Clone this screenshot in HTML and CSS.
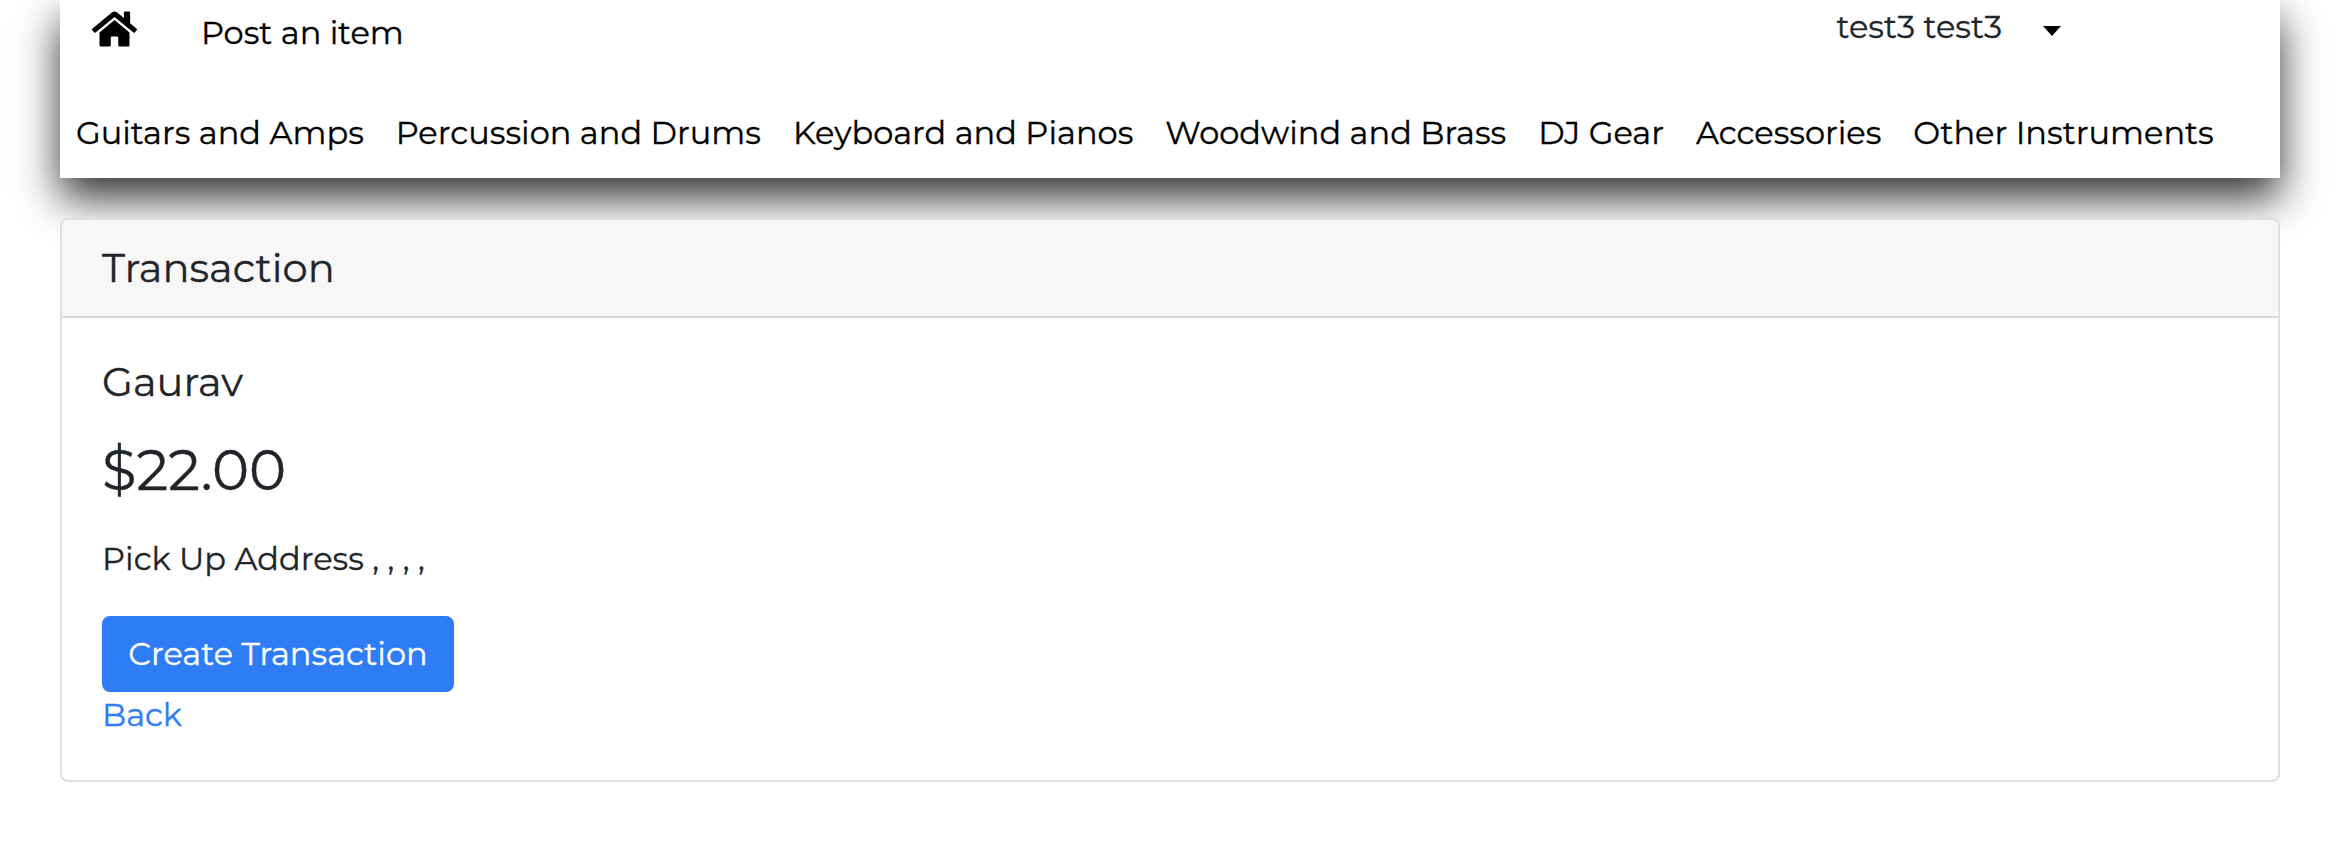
FILE: index.html
```html
<!DOCTYPE html>
<html lang="en">
<head>
<meta charset="utf-8">
<title>Transaction</title>
<link rel="stylesheet" href="styles.css">
</head>
<body>
<header class="header">
  <div class="topbar">
    <a class="home" href="#" aria-label="Home"><svg class="home-icon" viewBox="0 0 576 512"><path d="M280.4 148.3 96 300.1V464a16 16 0 0 0 16 16l112-.3a16 16 0 0 0 16-16V368a16 16 0 0 1 16-16h64a16 16 0 0 1 16 16v95.6a16 16 0 0 0 16 16.1l112 .3a16 16 0 0 0 16-16V300L295.7 148.3a12.2 12.2 0 0 0-15.3 0zM571.6 251.5 488 182.6V44a12 12 0 0 0-12-12h-56a12 12 0 0 0-12 12v72.6L318.5 43a48 48 0 0 0-61 0L4.3 251.5a12 12 0 0 0-1.6 16.9l25.5 31a12 12 0 0 0 16.9 1.6l235.2-193.7a12.2 12.2 0 0 1 15.3 0L530.9 301a12 12 0 0 0 16.9-1.6l25.5-31a12 12 0 0 0-1.7-16.9z"/></svg></a>
    <a class="post" href="#">Post an item</a>
    <div class="user">test3 test3<span class="caret"></span></div>
  </div>
  <nav class="nav">
    <a href="#">Guitars and Amps</a>
    <a href="#">Percussion and Drums</a>
    <a href="#">Keyboard and Pianos</a>
    <a href="#">Woodwind and Brass</a>
    <a href="#">DJ Gear</a>
    <a href="#">Accessories</a>
    <a href="#">Other Instruments</a>
  </nav>
</header>
<main class="card">
  <h5 class="card-header">Transaction</h5>
  <div class="card-body">
    <h5 class="name">Gaurav</h5>
    <h3 class="price">$22.00</h3>
    <p class="address">Pick Up Address , , , ,</p>
    <button class="button">Create Transaction</button>
    <a class="back" href="#">Back</a>
  </div>
</main>
</body>
</html>
```
FILE: styles.css
```css
* { box-sizing: border-box; }
body { margin: 0; padding: 0 64px 0 60px; background: #fff; color: #212529; font: 32px/48px Montserrat, Inter, sans-serif; letter-spacing: .025px; -webkit-text-stroke: .35px currentColor; overflow: hidden; }
a { color: #000; text-decoration: none; }
.header { height: 178px; background: #fff; box-shadow: 0 20px 40px rgba(0,0,0,.8); }
.topbar { display: flex; align-items: flex-start; height: 98px; padding-left: 32px; }
.home { display: block; margin-top: 9px; width: 45px; height: 40px; }
.home-icon { display: block; width: 45px; height: 40px; }
.post { margin: 9px 0 0 64px; }
.user { display: flex; align-items: center; margin: 3px 219px 0 auto; }
.caret { margin: 7px 0 0 41px; border: solid transparent; border-width: 10px 9px 0; border-top-color: #000; }
.nav { display: flex; gap: 32px; height: 80px; padding: 11px 16px 0; white-space: nowrap; }
.card { position: relative; height: 564px; margin-top: 40px; border: 2px solid #dfdfdf; border-radius: 8px; background: #fff; overflow: hidden; }
.card-header, .name { margin: 0; font-size: 40px; font-weight: 400; line-height: 48px; }
.card-header { height: 98px; padding: 24px 40px; background: #f7f7f7; border-bottom: 2px solid #d8d8d8; }
.card-body { display: flex; flex-direction: column; align-items: flex-start; padding: 40px; }
.price { margin: 31px 0; font-size: 56px; font-weight: 400; line-height: 67px; }
.address { margin: 0 0 33px; }
.button { width: 352px; height: 76px; padding: 0; border: 2px solid #2e7cf6; border-radius: 8px; background: #2e7cf6; color: #fff; font: inherit; letter-spacing: inherit; }
.back { margin-top: -1px; color: #2e7cf6; }
```
